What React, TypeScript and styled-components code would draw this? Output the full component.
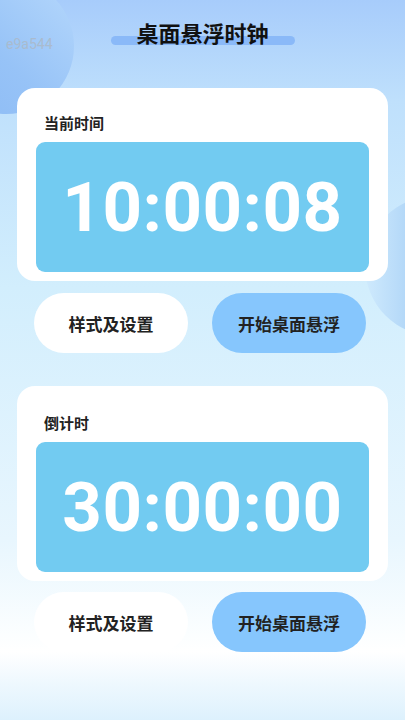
import * as React from 'react';
import styled, { createGlobalStyle } from 'styled-components';

const GlobalStyle = createGlobalStyle`
  html, body {
    margin: 0;
    padding: 0;
  }
  body {
    font-family: "Noto Sans CJK SC", "Noto Sans", sans-serif;
    color: #222;
  }
`;

const Screen = styled.div`
  position: relative;
  width: 405px;
  height: 720px;
  overflow: hidden;
  background: linear-gradient(
    180deg,
    #a7ccfb 0%,
    #bfe0fc 14%,
    #d2eefd 40%,
    #e8f6fe 75%,
    #fbfeff 88%,
    #ffffff 90.5%,
    #eef8fe 95%,
    #ddf1fd 100%
  );
`;

const Bubble = styled.div<{ $side: 'left' | 'right' }>`
  position: absolute;
  border-radius: 50%;
  ${p =>
    p.$side === 'left'
      ? `
    left: -62px;
    top: -22px;
    width: 136px;
    height: 136px;
    background: linear-gradient(225deg, #b0d4fb 10%, #97c3f7 55%, #8bbaf5 100%);
  `
      : `
    left: 365px;
    top: 196px;
    width: 140px;
    height: 140px;
    background: linear-gradient(90deg, #cfeafd 0%, #a9d1f6 40%, #9cc8f3 100%);
  `}
`;

const Content = styled.div`
  position: relative;
  z-index: 1;
  display: flex;
  flex-direction: column;
`;

const Header = styled.header`
  position: relative;
  height: 88px;
  display: flex;
  justify-content: center;
`;

const DeviceTag = styled.span`
  position: absolute;
  left: 6px;
  top: 36px;
  font-family: Roboto, "Liberation Sans", sans-serif;
  font-size: 14px;
  line-height: 16px;
  color: #a9bbcf;
`;

const Title = styled.h1`
  position: relative;
  isolation: isolate;
  margin: 16px 0 0;
  height: 32px;
  font-size: 22px;
  line-height: 32px;
  font-weight: 700;
  color: #111;

  &::before {
    content: '';
    position: absolute;
    left: -25px;
    right: -26px;
    top: 20px;
    height: 9px;
    border-radius: 5px;
    background: #8ab9f8;
    z-index: -1;
  }
`;

const Card = styled.section`
  margin: 0 17px;
  padding: 25px 19px 9px;
  background: #ffffff;
  border-radius: 18px;
  display: flex;
  flex-direction: column;
`;

const CardLabel = styled.h2<{ $offset: number }>`
  margin: ${p => p.$offset}px 0 0 8px;
  font-size: 15px;
  line-height: 20px;
  font-weight: 700;
  color: #222;
`;

const Display = styled.div`
  margin-top: 9px;
  height: 130px;
  border-radius: 9px;
  background: #72cbf1;
  display: flex;
  align-items: center;
  justify-content: center;
  font-family: Roboto, "Liberation Sans", sans-serif;
  font-weight: 700;
  font-size: 69px;
  color: #ffffff;
  letter-spacing: 0.5px;
`;

const Actions = styled.div<{ $top: number }>`
  display: flex;
  gap: 24px;
  margin: ${p => p.$top}px 0 0 34px;
`;

const Pill = styled.button<{ $primary?: boolean }>`
  width: 154px;
  height: 60px;
  border: none;
  border-radius: 30px;
  background: ${p => (p.$primary ? '#86c6fd' : '#ffffff')};
  font-family: "Noto Sans CJK SC", sans-serif;
  font-size: 17px;
  font-weight: 700;
  color: #222;
  padding: 0;
  cursor: pointer;
`;

const Spacer = styled.div`
  height: 33px;
`;

interface ClockCardProps {
  label: string;
  time: string;
  labelOffset: number;
}

const ClockCard: React.FC<ClockCardProps> = ({ label, time, labelOffset }) => (
  <Card>
    <CardLabel $offset={labelOffset}>{label}</CardLabel>
    <Display>{time}</Display>
  </Card>
);

const ClockActions: React.FC<{ top: number }> = ({ top }) => (
  <Actions $top={top}>
    <Pill>样式及设置</Pill>
    <Pill $primary>开始桌面悬浮</Pill>
  </Actions>
);

const App: React.FC = () => (
  <Screen>
    <GlobalStyle />
    <Bubble $side="left" />
    <Bubble $side="right" />
    <Content>
      <Header>
        <DeviceTag>e9a544</DeviceTag>
        <Title>桌面悬浮时钟</Title>
      </Header>
      <ClockCard label="当前时间" time="10:00:08" labelOffset={0} />
      <ClockActions top={12} />
      <Spacer />
      <ClockCard label="倒计时" time="30:00:00" labelOffset={2} />
      <ClockActions top={11} />
    </Content>
  </Screen>
);

export default App;
